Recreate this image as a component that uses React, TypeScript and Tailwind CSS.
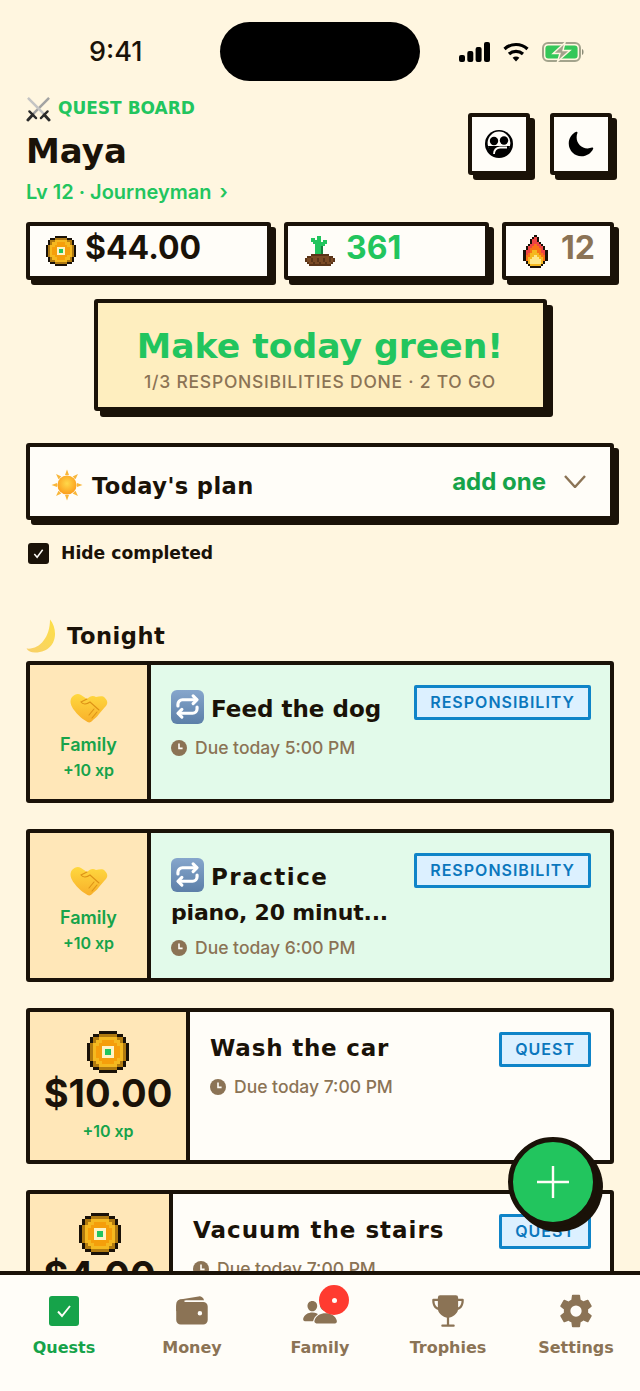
import { IoPeople, IoSettingsSharp, IoTrophy, IoWallet, IoMoon } from "react-icons/io5";

const pixel = "font-['DejaVu_Sans',sans-serif] font-bold";

const palette: Record<string, string> = {
  K: "#1a1208",
  D: "#b07a10",
  Y: "#f5b81f",
  O: "#f59e0b",
  W: "#fff3c4",
  G: "#22c55e",
  H: "#15803d",
  B: "#7a4a25",
  N: "#5a3418",
  R: "#ef4444",
  P: "#f97316",
  L: "#fde68a",
};

const coinRows = [
  "....KKKKKK....",
  "..KKDDDDDDKK..",
  ".KDDYYYYYYDDK.",
  ".KDYYOOOOYYDK.",
  "KDYYOOOOOOYYDK",
  "KDYOOWWWWOOYDK",
  "KDYOOWGGWOOYDK",
  "KDYOOWGGWOOYDK",
  "KDYOOWWWWOOYDK",
  "KDYYOOOOOOYYDK",
  ".KDYYOOOOYYDK.",
  ".KDDYYYYYYDDK.",
  "..KKDDDDDDKK..",
  "....KKKKKK....",
];

const plantRows = [
  "......GG.......",
  "...GG.GG.......",
  "...GGGGG.GG....",
  "....GGGGGGG....",
  ".....GGGGG.....",
  ".....GGGH......",
  ".....GGGH......",
  ".....GGGH......",
  ".....GGGH......",
  "...NNNNNNNNN...",
  ".NNBBBBBBBBBNN.",
  "NBBNBBNBBNBBNBN",
  "NBBNBBNBBNBBNBN",
  ".NBBNBBNBBNBBN.",
  "..NNNNNNNNNNN..",
];

const flameRows = [
  "......K......",
  ".....KRK.....",
  "....KRRK.....",
  "....KRRRK....",
  "...KRRPRRK...",
  "..KRRPPPRRK..",
  "..KRPPPPPRK..",
  ".KRRPYYPPRRK.",
  ".KRPYYYYPPRK.",
  ".KPPYYLYYPPK.",
  ".KPYYLLLYYPK.",
  ".KPYLLLLLYPK.",
  "..KYLLLLLYK..",
  "...KYYYYYK...",
  "....KKKKK....",
];

function Sprite({ rows, className }: { rows: string[]; className: string }) {
  return (
    <svg viewBox={`0 0 ${rows[0].length} ${rows.length}`} className={className} shapeRendering="crispEdges">
      {rows.map((row, y) =>
        row.split("").map((c, x) =>
          c === "." ? null : <rect key={`${x}-${y}`} x={x} y={y} width={1.02} height={1.02} fill={palette[c]} />
        )
      )}
    </svg>
  );
}

function Swords() {
  return (
    <svg viewBox="0 0 26 26" className="h-[26px] w-[25px] shrink-0">
      <path d="M24 1.5 L7 18.5" stroke="#a3a3a3" strokeWidth="2.6" />
      <path d="M2 1.5 L19 18.5" stroke="#c4c4c4" strokeWidth="2.6" />
      <path d="M3.5 15.5 L10.5 22.5 M22.5 15.5 L15.5 22.5" stroke="#2b2b2b" strokeWidth="2.4" strokeLinecap="round" />
      <path d="M7 19 L2 24.5 M19 19 L24 24.5" stroke="#2b2b2b" strokeWidth="3" strokeLinecap="round" />
    </svg>
  );
}

function Sun() {
  const rays = [0, 45, 90, 135, 180, 225, 270, 315];
  return (
    <svg viewBox="0 0 32 32" className="mt-[6px] h-[32px] w-[32px] shrink-0">
      <defs>
        <radialGradient id="sunFill" cx="50%" cy="42%" r="60%">
          <stop offset="0%" stopColor="#ffd84a" />
          <stop offset="100%" stopColor="#fb9a1a" />
        </radialGradient>
      </defs>
      {rays.map((r) => (
        <path key={r} d="M16 0.5 L18 6 L14 6 Z" fill="#f8b63a" transform={`rotate(${r} 16 16)`} />
      ))}
      <circle cx="16" cy="16" r="9.6" fill="url(#sunFill)" />
    </svg>
  );
}

function Crescent() {
  return (
    <svg viewBox="0 0 32 34" className="h-[34px] w-[32px] shrink-0">
      <defs>
        <linearGradient id="moonFill" x1="1" y1="0" x2="0" y2="1">
          <stop offset="0%" stopColor="#fde047" />
          <stop offset="100%" stopColor="#f8cf6a" />
        </linearGradient>
      </defs>
      <path d="M24 0.5 C33 11 31 33 9 33.5 C5 33.5 2 32 0.5 29.5 C13 31 24 19 24 0.5 Z" fill="url(#moonFill)" />
    </svg>
  );
}

function Handshake() {
  return (
    <svg viewBox="0 0 40 30" className="h-[30px] w-[40px]">
      <defs>
        <linearGradient id="shake" x1="0" y1="0" x2="0" y2="1">
          <stop offset="0%" stopColor="#ffd83f" />
          <stop offset="100%" stopColor="#f8b02a" />
        </linearGradient>
      </defs>
      <path
        d="M3 4 C6 1 9 0 12 2 L18 6 C21 3 24 2 27 4 C30 4 33 2 36 5 C39 8 39 11 36 14 L30 21 C28 24 26 25 24 27 C22 30 19 30 17 28 C13 26 8 21 5 17 C2 13 0 8 3 4 Z"
        fill="url(#shake)"
      />
      <path d="M18 6 L12 9 C14 12 18 11 21 9 L30 17 M25 16 L20 22 M28 19 L23 25" fill="none" stroke="#dd9216" strokeWidth="1.1" strokeLinecap="round" />
    </svg>
  );
}

function RepeatBadge() {
  return (
    <span className="my-[-4px] mr-[7px] inline-flex h-[34px] w-[33px] items-center justify-center rounded-[6px] bg-gradient-to-b from-[#86a6cc] to-[#5c7fa8] align-[-3px]">
      <svg viewBox="0 0 24 24" className="h-[27px] w-[27px]" fill="none" stroke="#fff" strokeWidth="2.8" strokeLinecap="round" strokeLinejoin="round">
        <path d="M17 2.5 L20.5 6 L17 9.5" />
        <path d="M3.5 11.5 V10 A4 4 0 0 1 7.5 6 H20" />
        <path d="M7 21.5 L3.5 18 L7 14.5" />
        <path d="M20.5 12.5 V14 A4 4 0 0 1 16.5 18 H4" />
      </svg>
    </span>
  );
}

function Clock() {
  return (
    <svg viewBox="0 0 16 16" className="h-[16px] w-[16px] shrink-0">
      <circle cx="8" cy="8" r="8" fill="#8b7355" />
      <path d="M8 3.6 V8.4 H11.6" fill="none" stroke="#fffdf8" strokeWidth="1.6" />
    </svg>
  );
}

function Due({ time, className }: { time: string; className: string }) {
  return (
    <div className={`flex items-center gap-[8px] text-[17.5px] leading-[26px] font-medium text-[#8b7355] ${className}`}>
      <Clock />
      <span>Due today {time}</span>
    </div>
  );
}

function Badge({ label }: { label: string }) {
  return (
    <span className="h-[35px] shrink-0 rounded-[2px] border-[3px] border-[#0f84c8] bg-[#dcf0ff] px-[13px] text-[16px] leading-[29px] font-semibold tracking-[1px] text-[#0b77bd]">
      {label}
    </span>
  );
}

function StatCard({ className, children }: { className: string; children: React.ReactNode }) {
  return (
    <div className={`flex h-[58px] items-center rounded-[3px] border-[4px] border-[#1a1208] bg-[#fffdf8] shadow-[5px_5px_0_#1a1208] ${className}`}>
      {children}
    </div>
  );
}

function FamilyCell() {
  return (
    <div className="flex w-[121px] shrink-0 flex-col items-center justify-center border-r-[4px] border-[#1a1208] bg-[#ffe7b8] pt-[10px]">
      <Handshake />
      <span className="mt-[9px] text-[18px] leading-[26px] font-semibold text-[#16a34a]">Family</span>
      <span className="text-[16px] leading-[24px] font-semibold text-[#16a34a]">+10 xp</span>
    </div>
  );
}

function MoneyCell({ amount, className, xp }: { amount: string; className: string; xp?: boolean }) {
  return (
    <div className={`flex shrink-0 flex-col items-center border-r-[4px] border-[#1a1208] bg-[#ffe7b8] pt-[19px] ${className}`}>
      <Sprite rows={coinRows} className="h-[42px] w-[42px] shrink-0" />
      <span className="mt-[-2px] text-[38px] leading-[44px] font-bold text-[#1a1208]">{amount}</span>
      {xp && <span className="mt-[5px] text-[16px] leading-[22px] font-semibold text-[#16a34a]">+10 xp</span>}
    </div>
  );
}

function TaskCard({
  cell,
  title,
  titleClass,
  secondLine,
  time,
  badge,
  repeat,
  green,
  heightClass,
}: {
  cell: React.ReactNode;
  title: string;
  titleClass?: string;
  secondLine?: string;
  time: string;
  badge: string;
  repeat?: boolean;
  green?: boolean;
  heightClass: string;
}) {
  return (
    <div className={`flex overflow-hidden rounded-[3px] border-[4px] border-[#1a1208] ${heightClass}`}>
      {cell}
      <div className={`flex min-w-0 flex-1 items-start justify-between pt-[20px] pr-[19px] pl-[20px] ${green ? "bg-[#e2faea]" : "bg-[#fffdf8]"}`}>
        <div className="min-w-0 flex-1">
          <div className={`${pixel} whitespace-nowrap text-[23px] leading-[36px] text-[#1a1208] ${repeat ? "mt-[6px]" : "mt-[-2px]"}`}>
            {repeat && <RepeatBadge />}
            <span className={titleClass}>{title}</span>
            {secondLine && <div className="text-[22px] tracking-[-0.2px]">{secondLine}</div>}
          </div>
          <Due time={time} className={secondLine ? "mt-[4px]" : "mt-[8px]"} />
        </div>
        <Badge label={badge} />
      </div>
    </div>
  );
}

function NavItem({ label, active, children }: { label: string; active?: boolean; children: React.ReactNode }) {
  return (
    <div className="flex flex-col items-center">
      <div className="relative flex h-[40px] w-[40px] items-center justify-center">{children}</div>
      <span className={`${pixel} mt-[5px] text-[16px] leading-[24px] ${active ? "text-[#16a34a]" : "text-[#8b7355]"}`}>{label}</span>
    </div>
  );
}

export default function App() {
  return (
    <div className="relative flex h-[1391px] w-[640px] flex-col overflow-hidden bg-[#fff6e0] font-['Inter',sans-serif] text-[#1a1208]">
      <div className="flex-1 overflow-hidden">
        {/* status bar */}
        <div className="flex items-center pt-[22px]">
          <div className="w-[220px] pl-[89px] text-[27px] leading-[59px] font-medium">9:41</div>
          <div className="h-[59px] w-[200px] rounded-full bg-black" />
          <div className="flex items-center pl-[39px]">
            <svg viewBox="0 0 31 20" className="h-[20px] w-[31px]" fill="#000">
              <rect x="0" y="13" width="6" height="7" rx="2" />
              <rect x="8.3" y="9" width="6" height="11" rx="2" />
              <rect x="16.6" y="5" width="6" height="15" rx="2" />
              <rect x="25" y="0" width="6" height="20" rx="2" />
            </svg>
            <svg viewBox="0 0 26 20" className="ml-[13px] h-[20px] w-[26px]" fill="none" stroke="#000" strokeWidth="3.2">
              <path d="M1.5 7 C8 1 18 1 24.5 7" />
              <path d="M6 12 C10 8.5 16 8.5 20 12" />
              <path d="M13 19.5 L9.6 15.8 C11.5 14.2 14.5 14.2 16.4 15.8 Z" fill="#000" stroke="none" />
            </svg>
            <svg viewBox="0 0 43 20" className="ml-[13px] h-[20px] w-[43px]">
              <rect x="1" y="1" width="37" height="18" rx="5" fill="none" stroke="#a3a38c" strokeWidth="2" />
              <rect x="3.4" y="3.4" width="32.2" height="13.2" rx="3" fill="#34c759" />
              <path d="M40 7 C42 7.5 42 12.5 40 13 Z" fill="#8c8c78" />
              <path d="M23 0.5 L11 11.5 H18 L15.5 19.5 L28 8.5 H21 Z" fill="#a3a38c" stroke="#fff6e0" strokeWidth="1.4" />
            </svg>
          </div>
        </div>

        {/* header */}
        <div className="mt-[15px] flex items-start justify-between pr-[28px] pl-[26px]">
          <div>
            <div className="flex h-[26px] items-center gap-[7px]">
              <Swords />
              <span className={`${pixel} text-[17px] text-[#22c55e]`}>QUEST BOARD</span>
            </div>
            <div className={`${pixel} mt-[7px] text-[34px] leading-[44px]`}>Maya</div>
            <div className="mt-[5px] text-[20px] leading-[28px] font-semibold text-[#22c55e]">
              Lv 12 · Journeyman<span className="ml-[8px]">›</span>
            </div>
          </div>
          <div className="mt-[17px] flex gap-[20px]">
            <div className="flex h-[62px] w-[62px] items-center justify-center rounded-[3px] border-[4px] border-[#1a1208] bg-[#fffdf8] shadow-[5px_5px_0_#1a1208]">
              <svg viewBox="0 0 28 28" className="h-[28px] w-[28px]">
                <circle cx="14" cy="14" r="14" fill="#000" />
                <circle cx="14" cy="13" r="11.4" fill="#fffdf8" />
                <circle cx="9" cy="11" r="4.2" fill="#000" />
                <circle cx="19" cy="10.5" r="4.2" fill="#000" />
                <path d="M3 16 H25 C24 22 19 26 14 26 C9 26 4 22 3 16 Z" fill="#000" />
                <path d="M9 24 C9 20 11 18 15 17.5 H22" fill="none" stroke="#fffdf8" strokeWidth="1.8" />
              </svg>
            </div>
            <div className="flex h-[62px] w-[62px] items-center justify-center rounded-[3px] border-[4px] border-[#1a1208] bg-[#fffdf8] shadow-[5px_5px_0_#1a1208]">
              <IoMoon className="h-[28px] w-[28px] text-black" />
            </div>
          </div>
        </div>

        {/* stats */}
        <div className="mt-[16px] flex gap-[13px] pr-[26px] pl-[26px]">
          <StatCard className="w-[245px] pl-[16px]">
            <Sprite rows={coinRows} className="h-[30px] w-[30px]" />
            <span className="mb-[7px] ml-[9px] text-[32px] leading-[40px] font-bold">$44.00</span>
          </StatCard>
          <StatCard className="w-[205px] pl-[17px]">
            <Sprite rows={plantRows} className="h-[30px] w-[30px]" />
            <span className="mb-[7px] ml-[11px] text-[32px] leading-[40px] font-bold text-[#22c55e]">361</span>
          </StatCard>
          <StatCard className="flex-1 pl-[15px]">
            <Sprite rows={flameRows} className="h-[33px] w-[29px]" />
            <span className="mb-[7px] ml-[11px] text-[32px] leading-[40px] font-bold text-[#8b7355]">12</span>
          </StatCard>
        </div>

        {/* today's banner */}
        <div className="mx-auto mt-[19px] flex h-[112px] w-[453px] flex-col items-center justify-center rounded-[3px] border-[4px] border-[#1a1208] bg-[#feeebf] pt-[8px] shadow-[6px_6px_0_#1a1208]">
          <div className={`${pixel} text-[34.6px] leading-[44px] text-[#22c55e]`}>Make today green!</div>
          <div className="mt-[2px] text-[17.5px] leading-[24px] font-medium tracking-[0.75px] whitespace-nowrap text-[#8b7355]">
            1/3 RESPONSIBILITIES DONE · 2 TO GO
          </div>
        </div>

        {/* plan */}
        <div className="mx-[26px] mt-[32px] flex h-[77px] items-center rounded-[3px] border-[4px] border-[#1a1208] bg-[#fffdf8] pr-[24px] pl-[21px] shadow-[5px_5px_0_#1a1208]">
          <Sun />
          <span className={`${pixel} mt-[8px] ml-[9px] text-[22.6px] leading-[30px] tracking-[0.4px]`}>Today's plan</span>
          <span className="mt-[0px] ml-auto text-[24px] leading-[32px] font-bold text-[#16a34a]">add one</span>
          <svg viewBox="0 0 22 13" className="mt-[0px] ml-[18px] h-[13px] w-[22px]" fill="none" stroke="#8b7355" strokeWidth="2.4">
            <path d="M1 1 L11 12 L21 1" />
          </svg>
        </div>

        <div className="mx-[28px] mt-[22px] flex items-center gap-[12px]">
          <div className="flex h-[21px] w-[21px] items-center justify-center rounded-[3px] bg-[#1a1208]">
            <svg viewBox="0 0 14 14" className="h-[13px] w-[13px]" fill="none" stroke="#fffdf8" strokeWidth="1.6">
              <path d="M2.5 7.5 L5.5 11 L11.5 3" />
            </svg>
          </div>
          <span className={`${pixel} text-[17.2px] leading-[22px]`}>Hide completed</span>
        </div>

        {/* tonight */}
        <div className="mt-[54px] ml-[26px] flex h-[36px] items-center gap-[9px]">
          <Crescent />
          <span className={`${pixel} text-[22.6px] leading-[30px] tracking-[0.5px]`}>Tonight</span>
        </div>

        <div className="mx-[26px] mt-[7px] flex flex-col gap-[26px]">
          <TaskCard cell={<FamilyCell />} title="Feed the dog" time="5:00 PM" badge="RESPONSIBILITY" repeat green heightClass="h-[142px]" />
          <TaskCard cell={<FamilyCell />} title="Practice" titleClass="tracking-[1.5px]" secondLine="piano, 20 minut..." time="6:00 PM" badge="RESPONSIBILITY" repeat green heightClass="h-[153px]" />
          <TaskCard cell={<MoneyCell amount="$10.00" xp className="w-[160px]" />} title="Wash the car" titleClass="tracking-[0.8px]" time="7:00 PM" badge="QUEST" heightClass="h-[156px]" />
          <TaskCard cell={<MoneyCell amount="$4.00" className="w-[143px]" />} title="Vacuum the stairs" titleClass="tracking-[1px]" time="7:00 PM" badge="QUEST" heightClass="h-[156px]" />
        </div>
      </div>

      {/* tab bar */}
      <div className="grid h-[120px] shrink-0 grid-cols-5 border-t-[4px] border-[#1a1208] bg-[#fffdf8] pt-[16px]">
        <NavItem label="Quests" active>
          <div className="flex h-[30px] w-[30px] items-center justify-center rounded-[3px] bg-[#16a34a]">
            <svg viewBox="0 0 20 20" className="h-[20px] w-[20px]" fill="none" stroke="#fffdf8" strokeWidth="1.9">
              <path d="M4 10.5 L8 15 L16 5" />
            </svg>
          </div>
        </NavItem>
        <NavItem label="Money">
          <IoWallet className="h-[36px] w-[36px] text-[#8b7355]" />
        </NavItem>
        <NavItem label="Family">
          <IoPeople className="h-[36px] w-[36px] text-[#8b7355]" />
          <div className="absolute top-[-6px] left-[19px] flex h-[30px] w-[30px] items-center justify-center rounded-full bg-[#ff3b30]">
            <div className="h-[5px] w-[5px] rounded-full bg-[#fffdf8]" />
          </div>
        </NavItem>
        <NavItem label="Trophies">
          <IoTrophy className="h-[36px] w-[36px] text-[#8b7355]" />
        </NavItem>
        <NavItem label="Settings">
          <IoSettingsSharp className="h-[36px] w-[36px] text-[#8b7355]" />
        </NavItem>
      </div>

      <button className="absolute top-[1137px] left-[508px] flex h-[90px] w-[90px] items-center justify-center rounded-full border-[5px] border-[#1a1208] bg-[#22c55e] shadow-[5px_5px_0_#1a1208]">
        <svg viewBox="0 0 32 32" className="h-[32px] w-[32px]" stroke="#fffdf8" strokeWidth="2.4">
          <path d="M16 0 V32 M0 16 H32" />
        </svg>
      </button>
    </div>
  );
}
